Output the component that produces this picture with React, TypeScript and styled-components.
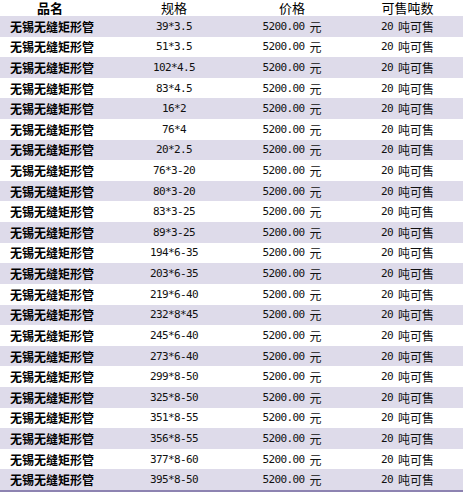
import { FC } from "react";
import styled, { createGlobalStyle } from "styled-components";

const GlobalStyle = createGlobalStyle`
  body {
    margin: 0;
    background: #ffffff;
    font-family: "Noto Sans CJK SC", "Liberation Sans", sans-serif;
  }
`;

const palette = {
  stripe: "#dedbea",
  line: "#8d83b1",
  text: "#000000",
  soft: "#111111",
};

const rows = [
  "39*3.5",
  "51*3.5",
  "102*4.5",
  "83*4.5",
  "16*2",
  "76*4",
  "20*2.5",
  "76*3-20",
  "80*3-20",
  "83*3-25",
  "89*3-25",
  "194*6-35",
  "203*6-35",
  "219*6-40",
  "232*8*45",
  "245*6-40",
  "273*6-40",
  "299*8-50",
  "325*8-50",
  "351*8-55",
  "356*8-55",
  "377*8-60",
  "395*8-50",
];

const Table = styled.div`
  width: 463px;
  height: 490px;
  display: grid;
  grid-template-columns: 100px 148px 88px 127px;
  grid-template-rows: 16px repeat(${rows.length}, 1fr);
  border-bottom: 2px solid ${palette.line};
`;

const Row = styled.div<{ $striped?: boolean }>`
  display: contents;

  & > div {
    background: ${(p) => (p.$striped ? palette.stripe : "transparent")};
  }
`;

const Cell = styled.div<{ $align?: "left" | "center"; $pad?: number }>`
  display: flex;
  align-items: center;
  justify-content: ${(p) => (p.$align === "left" ? "flex-start" : "center")};
  padding-left: ${(p) => p.$pad ?? 0}px;
  color: ${palette.soft};
  white-space: nowrap;
`;

const HeadCell = styled(Cell)<{ $bold?: boolean }>`
  font-size: 13px;
  line-height: 16px;
  font-weight: ${(p) => (p.$bold ? 700 : 400)};
  color: ${palette.text};
`;

const Name = styled.span`
  font-size: 12px;
  font-weight: 700;
  color: ${palette.text};
`;

const Num = styled.span`
  font-family: "DejaVu Sans Mono", "Liberation Mono", monospace;
  font-size: 11px;
  letter-spacing: -0.6px;
`;

const Han = styled.span`
  font-size: 12px;
  margin-left: 5px;
`;

const App: FC = () => (
  <>
    <GlobalStyle />
    <Table>
      <Row>
        <HeadCell $bold>品名</HeadCell>
        <HeadCell>规格</HeadCell>
        <HeadCell>价格</HeadCell>
        <HeadCell $pad={16}>可售吨数</HeadCell>
      </Row>
      {rows.map((spec, i) => (
        <Row key={i} $striped={i % 2 === 0}>
          <Cell $align="left" $pad={10}>
            <Name>无锡无缝矩形管</Name>
          </Cell>
          <Cell>
            <Num>{spec}</Num>
          </Cell>
          <Cell>
            <Num>5200.00</Num>
            <Han>元</Han>
          </Cell>
          <Cell $pad={16}>
            <Num>20</Num>
            <Han>吨可售</Han>
          </Cell>
        </Row>
      ))}
    </Table>
  </>
);

export default App;
